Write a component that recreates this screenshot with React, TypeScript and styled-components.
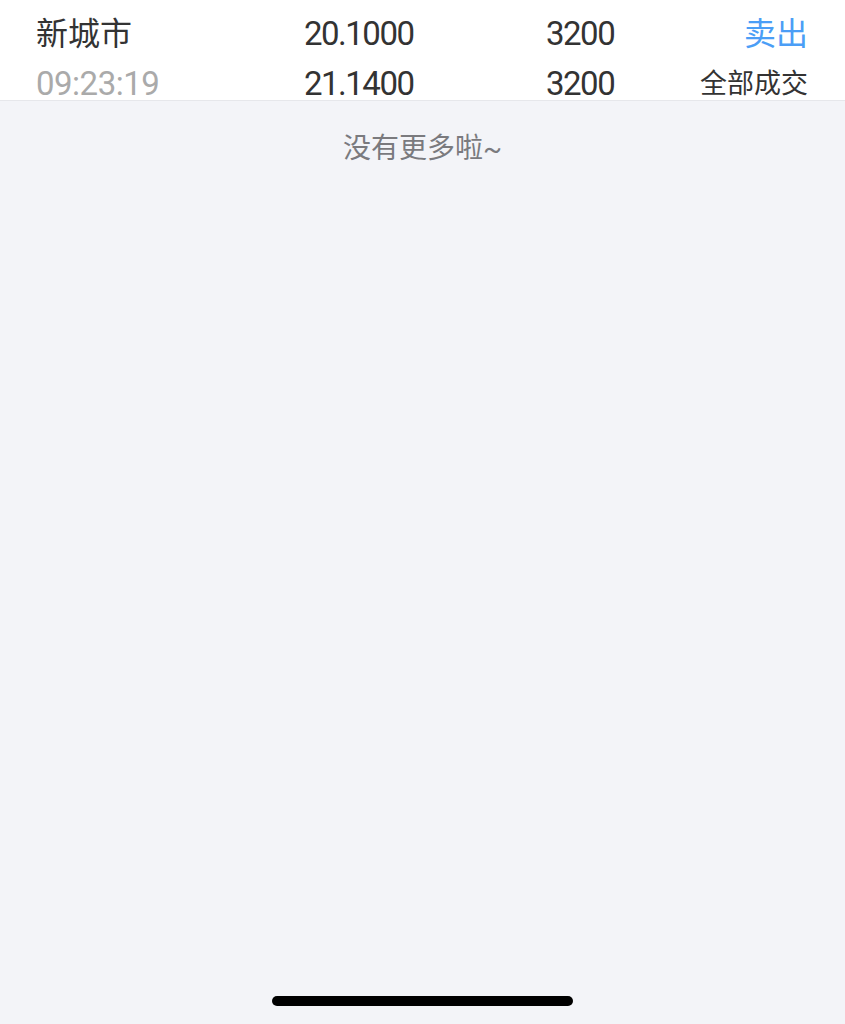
import styled, { createGlobalStyle } from 'styled-components'

const GlobalStyle = createGlobalStyle`
  html, body {
    margin: 0;
    padding: 0;
    background: #f3f4f8;
  }
  * {
    box-sizing: border-box;
  }
`

const Page = styled.div`
  display: flex;
  flex-direction: column;
  min-height: 100vh;
  background: #f3f4f8;
  font-family: Roboto, 'Noto Sans CJK SC', sans-serif;
`

const OrderCard = styled.section`
  display: flex;
  flex-direction: column;
  gap: 17.5px;
  height: 101px;
  background: #ffffff;
  border-bottom: 1px solid #e6e7eb;
  padding: 18px 37px 0 36px;
`

const OrderRow = styled.div`
  display: grid;
  grid-template-columns: 268px 242px 1fr auto;
  align-items: center;
  height: 32px;
`

// 숫자 칸은 좁은 DIN 느낌을 내려고 자간을 줄임
const Cell = styled.span<{ $color?: string; $size?: number; $tight?: number }>`
  font-size: ${({ $size = 33 }) => $size}px;
  line-height: 32px;
  letter-spacing: ${({ $tight = 0 }) => $tight}px;
  color: ${({ $color = '#333333' }) => $color};
  white-space: nowrap;
`

const StatusCell = styled(Cell)`
  justify-self: end;
`

const Footer = styled.div`
  flex: 1;
  display: flex;
  flex-direction: column;
  align-items: center;
`

const NoMore = styled.p`
  margin: 30px 0 0;
  font-size: 28px;
  line-height: 36px;
  color: #7a7a7e;
`

const Spacer = styled.div`
  flex: 1;
`

const HomeIndicator = styled.div`
  width: 301px;
  height: 10px;
  border-radius: 5px;
  background: #000000;
  margin-bottom: 18px;
`

const rows = [
  {
    name: '新城市',
    nameColor: '#333333',
    nameSize: 32,
    nameTight: 0,
    price: '20.1000',
    qty: '3200',
    status: '卖出',
    statusColor: '#4b9ef6',
    statusSize: 32,
  },
  {
    name: '09:23:19',
    nameColor: '#aaaaaa',
    nameSize: 33,
    nameTight: -0.5,
    price: '21.1400',
    qty: '3200',
    status: '全部成交',
    statusColor: '#333333',
    statusSize: 27,
  },
]

const App = () => {
  return (
    <Page>
      <GlobalStyle />
      <OrderCard>
        {rows.map((row) => (
          <OrderRow key={row.name}>
            <Cell $color={row.nameColor} $size={row.nameSize} $tight={row.nameTight}>
              {row.name}
            </Cell>
            <Cell $tight={-1.5}>{row.price}</Cell>
            <Cell $tight={-1.5}>{row.qty}</Cell>
            <StatusCell $color={row.statusColor} $size={row.statusSize}>
              {row.status}
            </StatusCell>
          </OrderRow>
        ))}
      </OrderCard>
      <Footer>
        <NoMore>没有更多啦~</NoMore>
        <Spacer />
        <HomeIndicator />
      </Footer>
    </Page>
  )
}

export default App
